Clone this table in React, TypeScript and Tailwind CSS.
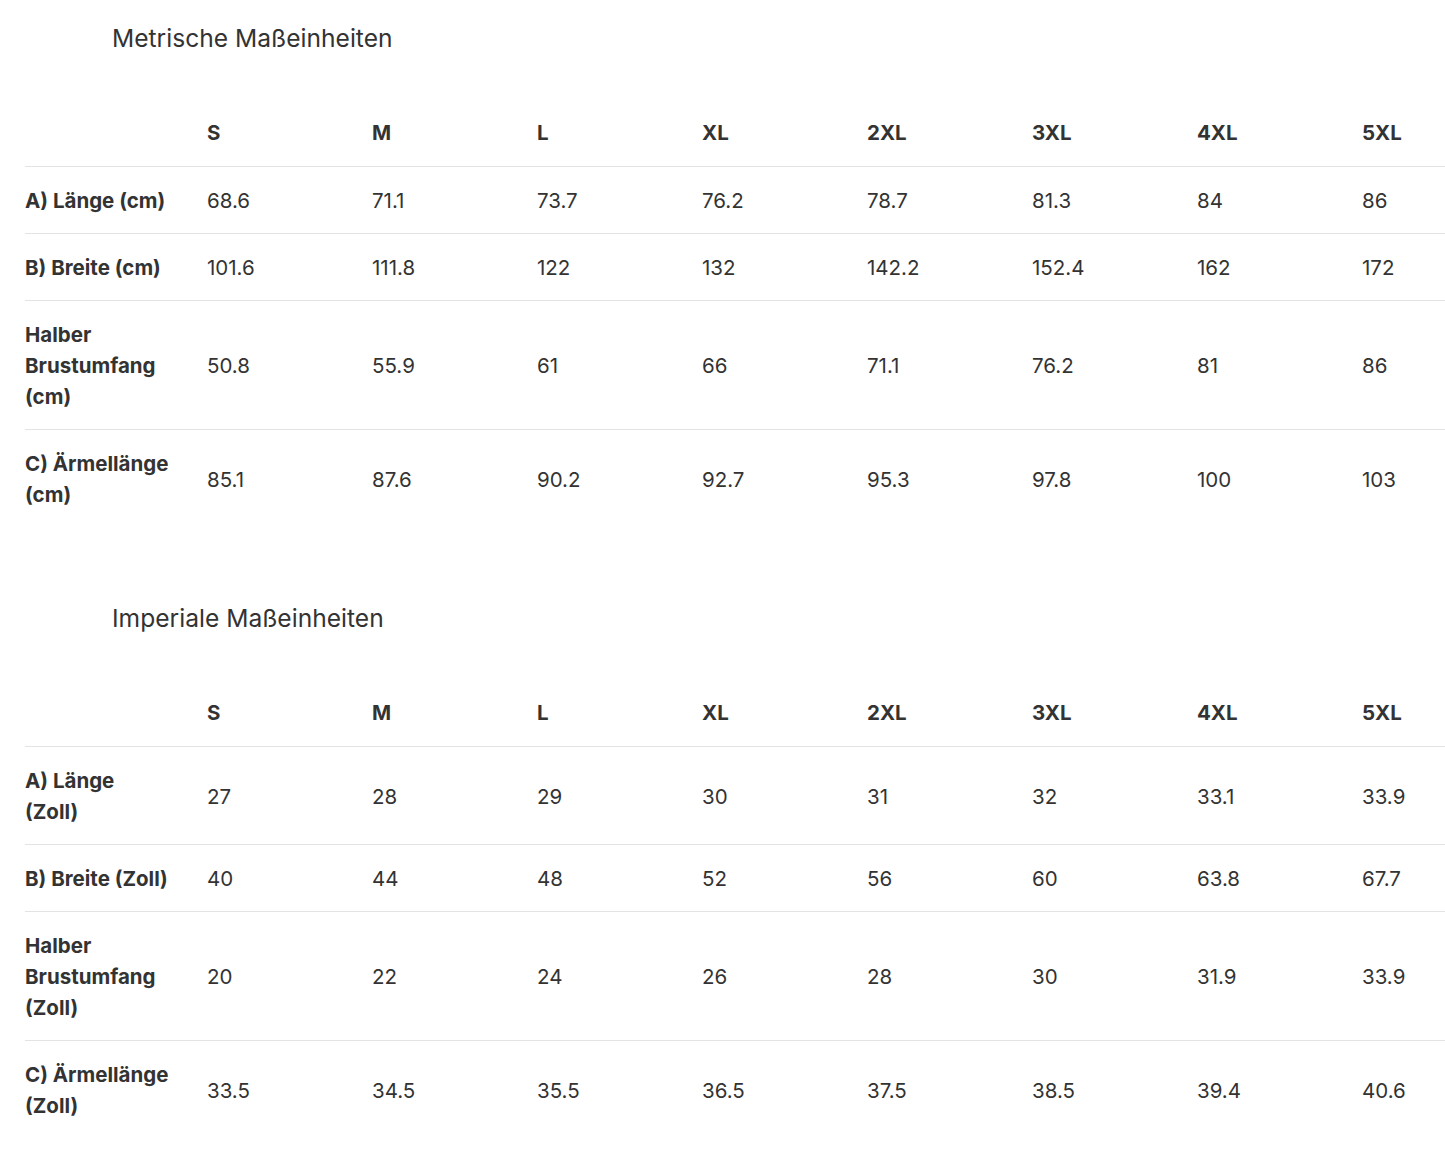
const sizes = ['S', 'M', 'L', 'XL', '2XL', '3XL', '4XL', '5XL'];

type Row = { label: string[]; values: string[] };

const metric: Row[] = [
  { label: ['A) Länge (cm)'], values: ['68.6', '71.1', '73.7', '76.2', '78.7', '81.3', '84', '86'] },
  { label: ['B) Breite (cm)'], values: ['101.6', '111.8', '122', '132', '142.2', '152.4', '162', '172'] },
  { label: ['Halber', 'Brustumfang', '(cm)'], values: ['50.8', '55.9', '61', '66', '71.1', '76.2', '81', '86'] },
  { label: ['C) Ärmellänge', '(cm)'], values: ['85.1', '87.6', '90.2', '92.7', '95.3', '97.8', '100', '103'] },
];

const imperial: Row[] = [
  { label: ['A) Länge', '(Zoll)'], values: ['27', '28', '29', '30', '31', '32', '33.1', '33.9'] },
  { label: ['B) Breite (Zoll)'], values: ['40', '44', '48', '52', '56', '60', '63.8', '67.7'] },
  { label: ['Halber', 'Brustumfang', '(Zoll)'], values: ['20', '22', '24', '26', '28', '30', '31.9', '33.9'] },
  { label: ['C) Ärmellänge', '(Zoll)'], values: ['33.5', '34.5', '35.5', '36.5', '37.5', '38.5', '39.4', '40.6'] },
];

function SizeTable({ title, rows }: { title: string; rows: Row[] }) {
  return (
    <section>
      <h2 className="pl-[112px] text-[24.6px] leading-[32px] font-normal text-[#333]">{title}</h2>
      <table className="mt-[45px] ml-[25px] w-[1502px] table-fixed border-collapse text-left text-[20.5px] leading-[31px] text-[#333]">
        <colgroup>
          <col className="w-[182px]" />
          {sizes.map((s) => (
            <col key={s} className="w-[165px]" />
          ))}
        </colgroup>
        <thead>
          <tr className="border-b border-[#e3e3e3]">
            <th className="py-[18px]" />
            {sizes.map((s) => (
              <th key={s} className="py-[18px] font-bold">
                {s}
              </th>
            ))}
          </tr>
        </thead>
        <tbody>
          {rows.map((row, i) => (
            <tr key={i} className={i < rows.length - 1 ? 'border-b border-[#e3e3e3]' : ''}>
              <td className="pt-[18px] pb-[17px] font-bold align-middle">
                {row.label.map((l, j) => (
                  <div key={j} className="whitespace-nowrap">{l}</div>
                ))}
              </td>
              {row.values.map((v, j) => (
                <td key={j} className="pt-[18px] pb-[17px] align-middle">
                  {v}
                </td>
              ))}
            </tr>
          ))}
        </tbody>
      </table>
    </section>
  );
}

export default function App() {
  return (
    <div className="min-h-[1174px] w-[1445px] overflow-hidden bg-white pt-[22px] font-['Inter',sans-serif]">
      <SizeTable title="Metrische Maßeinheiten" rows={metric} />
      <div className="h-[75px]" />
      <SizeTable title="Imperiale Maßeinheiten" rows={imperial} />
    </div>
  );
}
